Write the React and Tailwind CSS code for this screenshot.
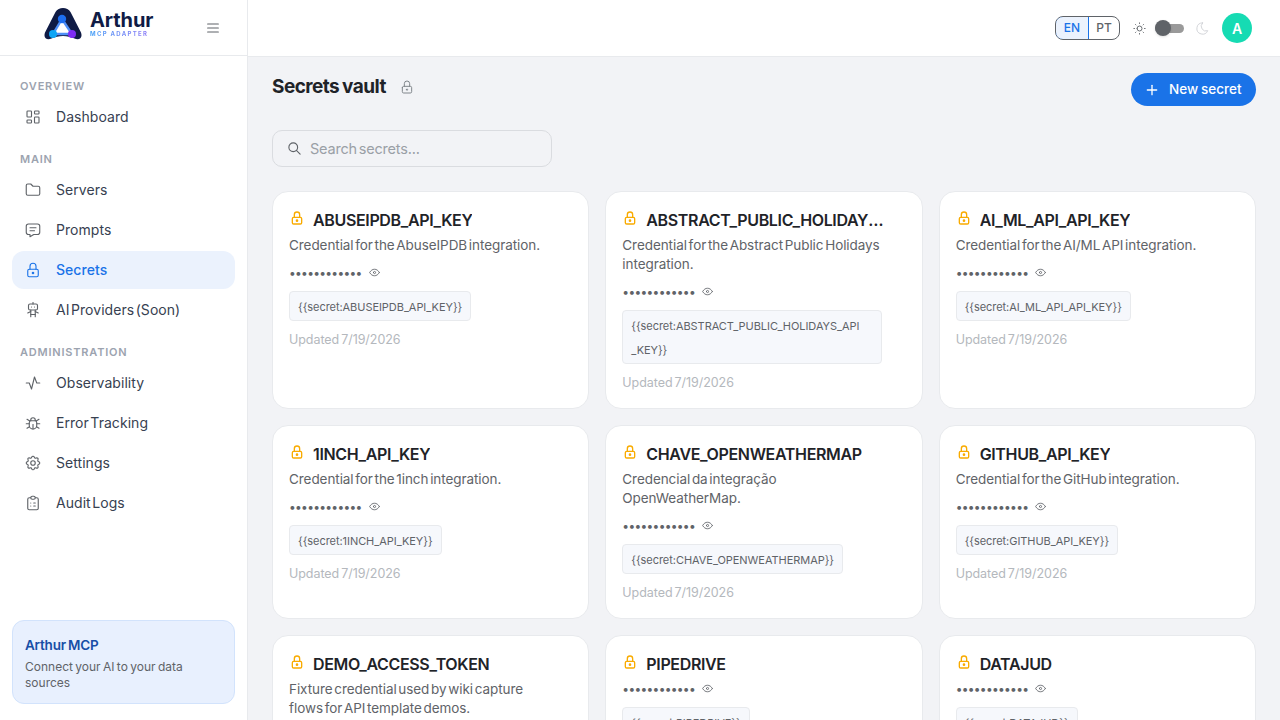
import React from "react";
import { TbLayoutDashboard, TbFolder, TbMessage, TbLock, TbRobot, TbActivity, TbBug, TbSettings, TbClipboardList, TbMenu2, TbSun, TbMoon, TbPlus, TbSearch, TbEye } from "react-icons/tb";

const font = { fontFamily: '"Inter", "Liberation Sans", sans-serif' };

function Logo() {
  return (
    <svg width="38" height="32" viewBox="0 0 38 32" className="shrink-0">
      <path d="M11.5 4 C14.5 -1.2 23.5 -1.2 26.5 4 L37 24.5 C39 30 35 32.5 30.5 30.5 C24 27 14 27 7.5 30.5 C3 32.5 -1 30 1 24.5 Z" fill="#0f1b45" />
      <path d="M18 11 L9 26 L28 26 Z" fill="#ffffff" stroke="#4f8ff7" strokeWidth="2.4" />
      <circle cx="18" cy="11" r="4.2" fill="#1d6ef0" />
      <circle cx="9" cy="26" r="4" fill="#0ea5f5" />
      <circle cx="28" cy="26" r="4" fill="#7c2cf5" />
    </svg>
  );
}

function NavItem({ icon: Icon, label, active }) {
  return (
    <div className={`mb-[2px] flex h-[38px] items-center rounded-xl pl-[12px] ${active ? "bg-[#ebf2fd] font-medium text-[#1a73e8]" : "text-[#374151]"}`}>
      <Icon size={18} strokeWidth={1.5} className={`mr-[14px] shrink-0 ${active ? "text-[#1a73e8]" : "text-[#5f6368]"}`} />
      <span className="pb-[1px] text-[14px] tracking-[0.05px] [word-spacing:-2.5px]">{label}</span>
    </div>
  );
}

function SectionLabel({ children, className = "" }) {
  return <div className={`pl-[8px] text-[11px] font-semibold leading-[16px] tracking-[0.8px] text-[#9ca3af] ${className}`}>{children}</div>;
}

function Card({ name, desc, tag, wide }) {
  return (
    <div className="min-w-0 rounded-2xl border border-[#e8eaed] bg-white p-[16px]">
      <div className="flex items-start">
        <TbLock size={16} strokeWidth={2} className="mt-[2px] mr-[8px] shrink-0 text-[#f9ab00]" />
        <div className="max-w-[244px] truncate text-[16px] font-semibold leading-[24px] tracking-[-0.35px] text-[#1f2328]">{name}</div>
      </div>
      {desc && <div className="mt-[4px] mb-[6px] max-w-[262px] text-[13.5px] leading-[18.9px] tracking-[-0.07px] text-[#5f6368] [word-spacing:-2px]">{desc}</div>}
      <div className="mt-[1px] flex h-[24px] items-center">
        <span className="text-[12px] leading-[24px] tracking-[-0.7px] text-[#5f6368]">••••••••••••</span>
        <TbEye size={13} strokeWidth={1.6} className="ml-[6px] text-[#5f6368]" />
      </div>
      <div className={`mt-[6px] rounded-[4px] border border-[#e8eaed] bg-[#f6f8fc] px-[8px] pt-[3px] pb-[1px] text-[11px] leading-[24px] tracking-[-0.05px] text-[#5f6368] ${wide ? "w-[260px]" : "w-fit"}`}>
        {tag}
      </div>
      <div className="mt-[10px] text-[12.5px] leading-[18px] tracking-[-0.05px] text-[#b4b8bd] [word-spacing:-1.5px]">Updated 7/19/2026</div>
    </div>
  );
}

export default function App() {
  return (
    <div className="flex h-screen w-full overflow-hidden bg-[#f2f3f6]" style={font}>
      <aside className="flex h-full w-[248px] shrink-0 flex-col border-r border-[#e8eaed] bg-white">
        <div className="flex h-[56px] shrink-0 items-start border-b border-[#e8eaed] pt-[8px] pl-[44px] pr-[26px]">
          <Logo />
          <div className="ml-[8px] flex flex-col">
            <span className="mt-[2px] text-[20px] leading-[20px] font-bold tracking-[-0.1px] text-[#0f1b45]">Arthur</span>
            <span className="w-fit bg-gradient-to-r from-[#3b9cf6] to-[#8b7bf6] bg-clip-text text-[6px] leading-[8px] font-bold tracking-[1.3px] text-transparent">MCP ADAPTER</span>
          </div>
          <TbMenu2 size={16} strokeWidth={1.8} className="mt-[12px] ml-auto text-[#5f6368]" />
        </div>
        <nav className="flex flex-1 flex-col px-[12px] pt-[22px]">
          <SectionLabel className="mb-[4px]">OVERVIEW</SectionLabel>
          <NavItem icon={TbLayoutDashboard} label="Dashboard" />
          <SectionLabel className="mt-[13px] mb-[4px]">MAIN</SectionLabel>
          <NavItem icon={TbFolder} label="Servers" />
          <NavItem icon={TbMessage} label="Prompts" />
          <NavItem icon={TbLock} label="Secrets" active />
          <NavItem icon={TbRobot} label="AI Providers (Soon)" />
          <SectionLabel className="mt-[13px] mb-[4px]">ADMINISTRATION</SectionLabel>
          <NavItem icon={TbActivity} label="Observability" />
          <NavItem icon={TbBug} label="Error Tracking" />
          <NavItem icon={TbSettings} label="Settings" />
          <NavItem icon={TbClipboardList} label="Audit Logs" />
        </nav>
        <div className="mx-[12px] mb-[16px] rounded-xl border border-[#d2e3fc] bg-[#e8f0fe] px-[12px] pt-[14px] pb-[12px]">
          <div className="text-[13.5px] leading-[20px] font-semibold tracking-[-0.2px] text-[#174ea6] [word-spacing:-1px]">Arthur MCP</div>
          <div className="mt-[4px] text-[12px] leading-[16px] text-[#5f6368] [word-spacing:-1px]">Connect your AI to your data sources</div>
        </div>
      </aside>

      <div className="flex min-w-0 flex-1 flex-col">
        <header className="flex h-[57px] shrink-0 items-center justify-end border-b border-[#e8eaed] bg-white pr-[28px]">
          <div className="flex h-[24px] overflow-hidden rounded-lg border border-[#5f6368] text-[12px] font-medium">
            <div className="-m-[1px] mr-0 flex w-[34px] items-center justify-center rounded-l-lg border border-[#1a73e8] bg-[#ebf2fd] text-[#1a73e8]">EN</div>
            <div className="flex w-[30px] items-center justify-center text-[#5f6368]">PT</div>
          </div>
          <TbSun size={15} strokeWidth={1.5} className="ml-[12px] text-[#5f6368]" />
          <div className="relative ml-[8px] h-[9px] w-[29px] rounded-full bg-[#9a9a9a]">
            <div className="absolute top-[-3.5px] left-0 h-[16px] w-[16px] rounded-full bg-[#5f6368] shadow" />
          </div>
          <TbMoon size={15} strokeWidth={1.5} className="ml-[11px] text-[#d0d2d6]" />
          <div className="ml-[12px] flex h-[30px] w-[30px] items-center justify-center rounded-full bg-[#16dbb3] text-[14px] font-semibold text-white">A</div>
        </header>

        <main className="min-h-0 flex-1 overflow-hidden px-[24px] pt-[16px]">
          <div className="flex items-start justify-between">
            <div className="flex items-center pt-[1px]">
              <h1 className="text-[19px] leading-[26px] font-bold tracking-[-0.55px] text-[#1f2328] [word-spacing:-1px]">Secrets vault</h1>
              <TbLock size={16} strokeWidth={1.5} className="ml-[13px] text-[#80868b]" />
            </div>
            <button className="flex h-[33px] w-[125px] items-center rounded-full bg-[#1a73e8] pl-[13px] text-[13.5px] font-medium tracking-[0.05px] text-white [word-spacing:-1px]">
              <TbPlus size={16} strokeWidth={2} className="mr-[9px]" />
              New secret
            </button>
          </div>
          <div className="mt-[24px] flex h-[37px] w-[280px] items-center rounded-[10px] border border-[#dadce0] pl-[14px]">
            <TbSearch size={15} strokeWidth={1.8} className="mr-[8px] text-[#5f6368]" />
            <span className="text-[14.5px] tracking-[-0.2px] text-[#9aa0a6] [word-spacing:-2px]">Search secrets...</span>
          </div>
          <div className="mt-[24px] grid grid-cols-3 items-stretch gap-[16px]">
            <Card name="ABUSEIPDB_API_KEY" desc="Credential for the AbuseIPDB integration." tag="{{secret:ABUSEIPDB_API_KEY}}" />
            <Card name="ABSTRACT_PUBLIC_HOLIDAYS_API_KEY" desc="Credential for the Abstract Public Holidays integration." wide tag={<>{"{{secret:ABSTRACT_PUBLIC_HOLIDAYS_API"}<br />{"_KEY}}"}</>} />
            <Card name="AI_ML_API_API_KEY" desc="Credential for the AI/ML API integration." tag="{{secret:AI_ML_API_API_KEY}}" />
            <Card name="1INCH_API_KEY" desc="Credential for the 1inch integration." tag="{{secret:1INCH_API_KEY}}" />
            <Card name="CHAVE_OPENWEATHERMAP" desc="Credencial da integração OpenWeatherMap." tag="{{secret:CHAVE_OPENWEATHERMAP}}" />
            <Card name="GITHUB_API_KEY" desc="Credential for the GitHub integration." tag="{{secret:GITHUB_API_KEY}}" />
            <Card name="DEMO_ACCESS_TOKEN" desc="Fixture credential used by wiki capture flows for API template demos." tag="{{secret:DEMO_ACCESS_TOKEN}}" />
            <Card name="PIPEDRIVE" tag="{{secret:PIPEDRIVE}}" />
            <Card name="DATAJUD" tag="{{secret:DATAJUD}}" />
          </div>
        </main>
      </div>
    </div>
  );
}
